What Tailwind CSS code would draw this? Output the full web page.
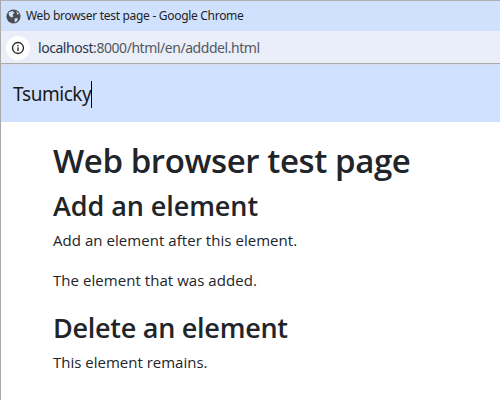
<!DOCTYPE html>
<html lang="en">
<head>
    <meta charset="UTF-8">
    <title>Web browser test page</title>
    <script src="https://cdn.jsdelivr.net/npm/@tailwindcss/browser@4"></script>
</head>
<body class="bg-white font-['Open_Sans',sans-serif] overflow-hidden">
    <div class="w-[500px] h-[400px] border-l border-l-[#a9a9a9] flex flex-col overflow-hidden">
        <div class="h-[31px] shrink-0 bg-[#d0e1fe] border-t border-t-[#b0b0b0] flex items-center pl-[5px] gap-[5px]">
            <svg class="w-[15px] h-[15px]" viewBox="0 0 16 16">
                <circle cx="8" cy="8" r="7.5" fill="#4a4d52"/>
                <path d="M3 3.5 L7 2 L9 4 L7 6 L8 8 L5.5 9 L3 6.5 Z M9 10 L12.5 9.5 L12 12.5 L9.5 14.5 Z M11 2.5 L14 5 L12 6 Z" fill="#d0e1fe"/>
            </svg>
            <span class="text-[12px] text-[#1f1f1f] tracking-[-0.3px] font-['Noto_Sans',sans-serif]">Web browser test page - Google Chrome</span>
        </div>
        <div class="h-[32px] shrink-0 bg-[#e9eef8] flex items-center pl-[5px] gap-[8px]">
            <div class="w-[24px] h-[24px] mt-[2px] rounded-full bg-white flex items-center justify-center">
                <svg class="w-[14px] h-[14px]" viewBox="0 0 14 14" fill="none">
                    <circle cx="7" cy="7" r="5.5" stroke="#202124" stroke-width="1.3"/>
                    <path d="M7 6.2V10M7 4V5.2" stroke="#202124" stroke-width="1.3"/>
                </svg>
            </div>
            <span class="text-[14px] text-[#2a3550] font-['Noto_Sans',sans-serif] tracking-[-0.45px]">localhost<span class="text-[#55585f]">:8000/html/en/adddel.html</span></span>
        </div>
        <div class="h-[1px] shrink-0 bg-[#a9a9a9]"></div>
        <div class="h-[1px] shrink-0 bg-[#d8dbe2]"></div>
        <div class="h-[57px] shrink-0 bg-[#cfe1ff] flex items-center pl-[12px] pt-[2px]">
            <span class="text-[19px] text-[#1a1a1a] font-['Noto_Sans',sans-serif] tracking-[-0.45px]">Tsumicky</span>
            <span class="w-[1px] h-[27px] bg-black"></span>
        </div>
        <div class="pl-[52px] text-[#212529]">
            <h1 class="mt-[18px] text-[33px] leading-[42px] font-semibold tracking-[-0.4px]">Web browser test page</h1>
            <h2 class="mt-[7px] text-[27px] leading-[34px] font-semibold tracking-[-0.08px]">Add an element</h2>
            <p class="mt-[5px] text-[15px] leading-[24px] tracking-[0.05px]">Add an element after this element.</p>
            <p class="mt-[16px] text-[15px] leading-[24px] tracking-[0.05px]">The element that was added.</p>
            <h2 class="mt-[19px] text-[27px] leading-[34px] font-semibold tracking-[-0.27px]">Delete an element</h2>
            <p class="mt-[5px] text-[15px] leading-[24px]">This element remains.</p>
        </div>
    </div>
</body>
</html>
